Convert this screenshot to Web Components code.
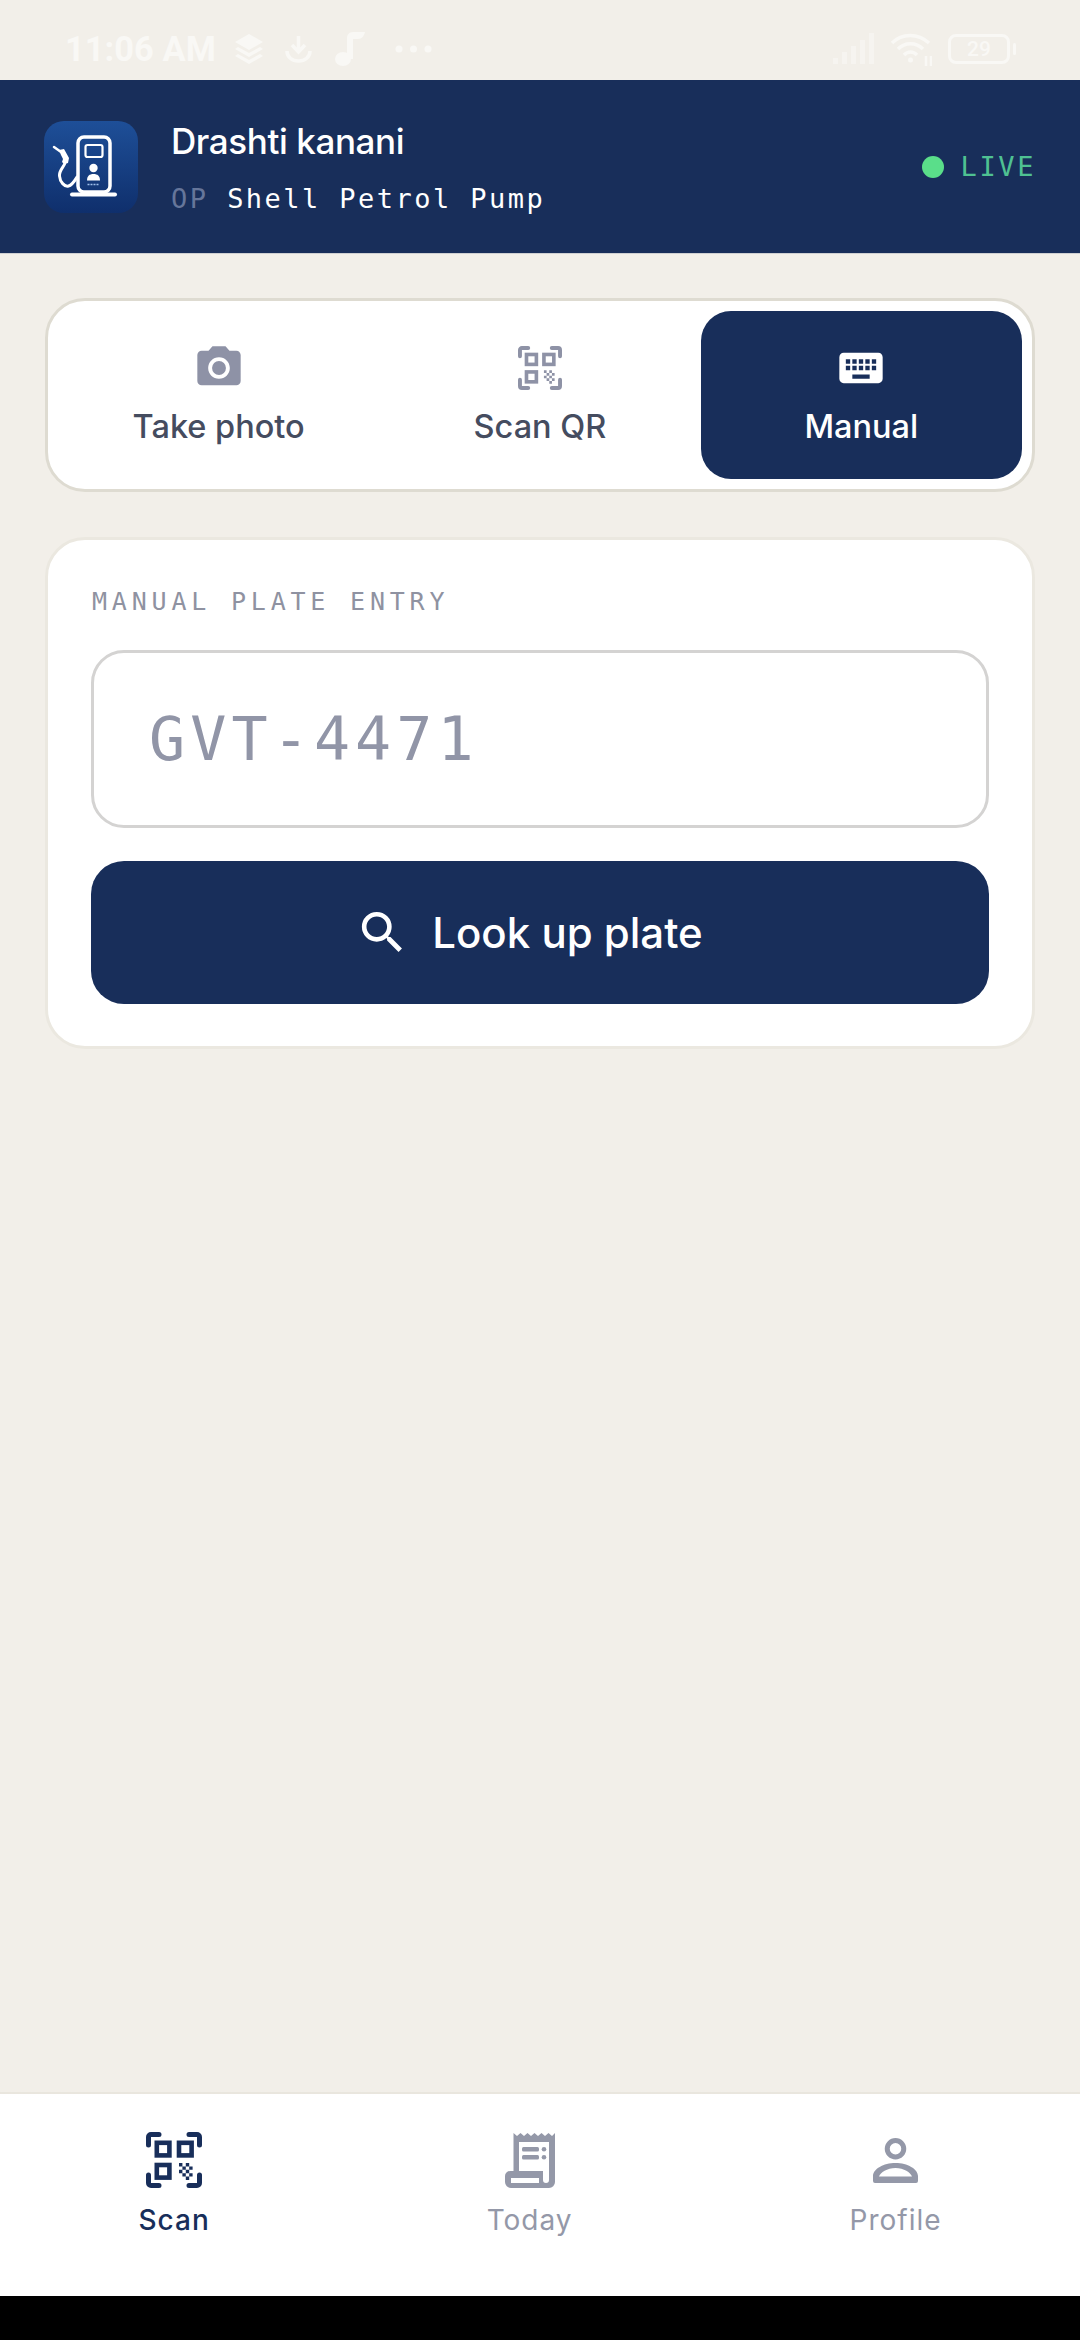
<!DOCTYPE html>
<html>
<head>
<meta charset="utf-8">
<title>Scan</title>
<style>
    html, body { margin: 0; padding: 0; background: #000; }
</style>
</head>
<body>
<app-shell>
    <status-bar slot="status"></status-bar>
    <app-header slot="header" name="Drashti kanani" role-tag="OP" station="Shell Petrol Pump"></app-header>
    <mode-tabs></mode-tabs>
    <plate-card label="MANUAL PLATE ENTRY" placeholder="GVT-4471" action="Look up plate"></plate-card>
    <bottom-nav slot="nav"></bottom-nav>
</app-shell>

<script>
//shared icons
var ICONS = {
    camera: `<svg viewBox="0 0 24 24" fill="currentColor"><circle cx="12" cy="12" r="3.2"/><path d="M9 2L7.17 4H4c-1.1 0-2 .9-2 2v12c0 1.1.9 2 2 2h16c1.1 0 2-.9 2-2V6c0-1.1-.9-2-2-2h-3.17L15 2H9zm3 15c-2.76 0-5-2.24-5-5s2.24-5 5-5 5 2.24 5 5-2.24 5-5 5z"/></svg>`,
    keyboard: `<svg viewBox="0 0 24 24" fill="currentColor"><path d="M20 5H4c-1.1 0-1.99.9-1.99 2L2 17c0 1.1.9 2 2 2h16c1.1 0 2-.9 2-2V7c0-1.1-.9-2-2-2zm-9 3h2v2h-2V8zm0 3h2v2h-2v-2zM8 8h2v2H8V8zm0 3h2v2H8v-2zm-1 2H5v-2h2v2zm0-3H5V8h2v2zm9 7H8v-2h8v2zm0-4h-2v-2h2v2zm0-3h-2V8h2v2zm3 3h-2v-2h2v2zm0-3h-2V8h2v2z"/></svg>`,
    search: `<svg viewBox="0 0 24 24" fill="currentColor"><path d="M15.5 14h-.79l-.28-.27A6.471 6.471 0 0 0 16 9.5 6.5 6.5 0 1 0 9.5 16c1.61 0 3.09-.59 4.23-1.57l.27.28v.79l5 4.99L20.49 19l-4.99-5zm-6 0C7.01 14 5 11.99 5 9.5S7.01 5 9.5 5 14 7.01 14 9.5 11.99 14 9.5 14z"/></svg>`,
    scan: `<svg viewBox="0 0 56 56" fill="currentColor">
        <g fill="none" stroke="currentColor" stroke-width="5" stroke-linecap="round" stroke-linejoin="round">
            <path d="M2.500 13V5a2.500 2.500 0 0 1 2.500-2.500h8"/><path d="M43 2.500h8a2.500 2.500 0 0 1 2.500 2.500v8"/>
            <path d="M2.500 43v8a2.500 2.500 0 0 0 2.500 2.500h8"/><path d="M43 53.500h8a2.500 2.500 0 0 0 2.500-2.500v-8"/>
        </g>
        <g fill="none" stroke="currentColor" stroke-width="4.600">
            <rect x="10.800" y="10.800" width="12.600" height="12.600"/><rect x="33" y="10.800" width="12.600" height="12.600"/><rect x="10.800" y="33" width="12.600" height="12.600"/>
        </g>
        <path d="M33 31h3.400v3.400H33zM39.800 31h3.400v3.400h-3.400zM36.400 34.400h3.400v3.400h-3.400zM43.200 34.400h3.400v3.400h-3.400zM33 37.800h3.400v3.400H33zM39.800 37.800h3.400v3.400h-3.400zM36.400 41.200h3.400v3.400h-3.400zM43.200 41.200h3.400v3.400h-3.400zM39.800 44.600h3.400v3.400h-3.400z"/>
    </svg>`,
    receipt: `<svg viewBox="0 0 50 55" fill="currentColor">
        <path fill-rule="evenodd" d="M8.500 0l3.500 3 3.500-3 3.500 3 3.500-3 3.500 3 3.500-3 3.500 3 3.500-3 3.500 3 3.500-3 3.500 3L50 0v49a6 6 0 0 1-6 6H6a6 6 0 0 1-6-6v-6a5 5 0 0 1 5-5h3.500zM14 9v29h24v9a3 3 0 0 0 6 0V9zM6 45v5h28v-5z"/>
        <rect x="17" y="14" width="17" height="4.500" rx="1.500"/><rect x="17" y="22" width="17" height="4.500" rx="1.500"/>
        <circle cx="39" cy="16.200" r="2.300"/><circle cx="39" cy="24.200" r="2.300"/>
    </svg>`,
    person: `<svg viewBox="0 0 45 45" fill="currentColor">
        <path fill-rule="evenodd" d="M22.500 0a10.750 10.750 0 1 1 0 21.500 10.750 10.750 0 0 1 0-21.500zm0 5a5.750 5.750 0 1 0 0 11.500 5.750 5.750 0 0 0 0-11.500z"/>
        <path fill-rule="evenodd" d="M22.500 25c12 0 22.500 6 22.500 13v5a2 2 0 0 1-2 2H2a2 2 0 0 1-2-2v-5c0-7 10.500-13 22.500-13zM6 38.500h33c-1.500-4-8-8.500-16.500-8.500S7.500 34.500 6 38.500z"/>
    </svg>`
};

//STATUS BAR
var template_status = document.createElement("template");
template_status.innerHTML = `
<style>
    :host {
        display: flex;
        align-items: center;
        height: 80px;
        padding: 18px 70px 0 65px;
        box-sizing: border-box;
        background: #f2efe9;
        color: #f9f8f5;
        font-family: Roboto, sans-serif;
    }
    #time { width: 150px; font-size: 34.500px; font-weight: 700; line-height: 1; margin-right: 20px; white-space: nowrap; }
    .ico { display: block; flex: none; }
    #right { margin-left: auto; display: flex; align-items: center; }
    #batt {
        position: relative;
        width: 62px;
        height: 30px;
        box-sizing: border-box;
        border: 3px solid currentColor;
        border-radius: 8px;
        display: flex;
        align-items: center;
        justify-content: center;
        font-size: 21px;
        font-weight: 500;
    }
    #batt::after {
        content: "";
        position: absolute;
        right: -9px;
        top: 6px;
        width: 3px;
        height: 12px;
        background: currentColor;
        border-radius: 2px;
    }
</style>
<span id="time">11:06 AM</span>
<svg class="ico" width="28" height="30" viewBox="0 0 28 30" fill="currentColor" style="margin-right:22px"><path d="M14 0l14 8-14 8L0 8z"/><path d="M3 13l11 6 11-6 3 2-14 8L0 15z"/><path d="M3 20l11 6 11-6 3 2-14 8L0 22z"/></svg>
<svg class="ico" width="27" height="28" viewBox="0 0 27 28" fill="none" stroke="currentColor" stroke-width="3.500" style="margin-right:23px"><path d="M13.500 1v15M7 10l6.500 7L20 10"/><path d="M2 16c0 6 5 10 11.500 10S25 22 25 16"/></svg>
<svg class="ico" width="30" height="34" viewBox="0 0 30 34" fill="currentColor" style="margin-right:30px"><ellipse cx="8" cy="27" rx="8" ry="7"/><path d="M12 27V6c0-3 2-6 6-6h12c-1 4-3 7-7 7h-5v20z"/></svg>
<svg class="ico" width="37" height="8" viewBox="0 0 37 8" fill="currentColor"><circle cx="4" cy="4" r="3.500"/><circle cx="18.500" cy="4" r="3.500"/><circle cx="33" cy="4" r="3.500"/></svg>
<div id="right">
    <svg class="ico" width="42" height="32" viewBox="0 0 42 32" fill="currentColor" opacity=".6" style="margin-right:15px"><rect x="0" y="25" width="5" height="6"/><rect x="9" y="19" width="5" height="12"/><rect x="18" y="13" width="5" height="18"/><rect x="27" y="7" width="5" height="24"/><rect x="36" y="0" width="5" height="31"/></svg>
    <svg class="ico" width="42" height="35" viewBox="0 0 42 35" fill="none" stroke="currentColor" stroke-width="3.500" style="margin-right:16px"><path d="M2 11C12 1 28 1 39 11"/><path d="M8 17c7-7 18-7 25 0"/><path d="M14 23c4-4 9-4 13 0"/><circle cx="20.500" cy="28" r="2.500" fill="currentColor" stroke="none"/><path d="M36 24v10M41 24v10" stroke-width="2.500"/></svg>
    <div id="batt">29</div>
</div>
`;
class StatusBar extends HTMLElement {
    constructor(){
        super();
        this.attachShadow({mode:"open"});
    }
    connectedCallback(){
        this.shadowRoot.appendChild(template_status.content.cloneNode(true));
    }
}
customElements.define("status-bar", StatusBar);

//HEADER
var template_header = document.createElement("template");
template_header.innerHTML = `
<style>
    :host {
        display: flex;
        align-items: center;
        height: 174px;
        box-sizing: border-box;
        padding: 0 44px;
        background: #182e5a;
        border-bottom: 1px solid #cfd0d2;
        color: #fff;
    }
    #logo { width: 94px; height: 92px; flex: none; display: block; margin-right: 33px; }
    #who { display: flex; flex-direction: column; gap: 21px; flex: 1; padding-top: 4px; }
    #name { font: 500 35px/40px Inter, sans-serif; letter-spacing: -.4px; }
    #sub { font: 400 27px/34px "DejaVu Sans Mono", monospace; letter-spacing: 2.450px; white-space: nowrap; }
    #tag { color: #66769a; }
    #live { display: flex; align-items: center; gap: 17px; font: 400 27px/30px "DejaVu Sans Mono", monospace; letter-spacing: 2.600px; color: #4fc192; }
    #dot { width: 22px; height: 22px; border-radius: 50%; background: #5ade8a; }
</style>
<svg id="logo" viewBox="0 0 94 92">
    <defs><linearGradient id="lg" x1="0" y1="0" x2="0" y2="1"><stop offset="0" stop-color="#1e4f98"/><stop offset="1" stop-color="#0f2f6c"/></linearGradient></defs>
    <rect width="94" height="92" rx="20" fill="url(#lg)"/>
    <g fill="none" stroke="#fff" stroke-linecap="round" stroke-linejoin="round">
        <rect x="34" y="16" width="32" height="55" rx="6" stroke-width="3.500"/>
        <rect x="41.500" y="24" width="17" height="12" rx="2" stroke-width="2.200"/>
        <path d="M28 73.500h43" stroke-width="4"/>
        <path d="M10 26l7 5" stroke-width="2.500"/>
        <path d="M21 42c-1 4-6 7-5.500 13 .5 6 5 11 9 10 4-1 6-5 8.500-9" stroke-width="3"/>
    </g>
    <path d="M15 29l5-1 5 9-1 5-4 1-2-2 1-3-2-4z" fill="#fff"/>
    <circle cx="49.500" cy="47" r="4.200" fill="#fff"/>
    <path d="M43 59.500c0-4.500 2.500-6.500 6.500-6.500s6.500 2 6.500 6.500z" fill="#fff"/>
    <path d="M43.500 63.500h12" stroke="#9fc0ea" stroke-width="1.500" stroke-dasharray="2 1"/>
</svg>
<div id="who">
    <div id="name"></div>
    <div id="sub"><span id="tag"></span> <span id="station"></span></div>
</div>
<div id="live"><span id="dot"></span><span>LIVE</span></div>
`;
class AppHeader extends HTMLElement {
    constructor(){
        super();
        this.attachShadow({mode:"open"});
    }
    connectedCallback(){
        this.shadowRoot.appendChild(template_header.content.cloneNode(true));
        this.shadowRoot.querySelector("#name").innerHTML = this.getAttribute("name");
        this.shadowRoot.querySelector("#tag").innerHTML = this.getAttribute("role-tag");
        this.shadowRoot.querySelector("#station").innerHTML = this.getAttribute("station");
    }
}
customElements.define("app-header", AppHeader);

//ONE TAB
var template_tab = document.createElement("template");
template_tab.innerHTML = `
<style>
    :host {
        display: flex;
        flex: 1 1 0;
        flex-direction: column;
        align-items: center;
        height: 168px;
        box-sizing: border-box;
        padding-top: 31px;
        border-radius: 30px;
        color: #8e92a6;
    }
    :host([active]) { background: #182e5a; color: #fff; }
    #icon { width: 52px; height: 52px; display: flex; align-items: center; justify-content: center; }
    #icon svg { width: 100%; height: 100%; display: block; }
    :host([icon="scan"]) #icon svg { width: 44px; height: 44px; }
    #text { margin-top: 14px; font: 500 32.500px/38px Inter, sans-serif; color: #454c5f; }
    :host([active]) #text { color: #fff; }
</style>
<div id="icon"></div>
<div id="text"><slot></slot></div>
`;
class ModeTab extends HTMLElement {
    constructor(){
        super();
        this.attachShadow({mode:"open"});
    }
    connectedCallback(){
        this.shadowRoot.appendChild(template_tab.content.cloneNode(true));
        this.shadowRoot.querySelector("#icon").innerHTML = ICONS[this.getAttribute("icon")];
    }
}
customElements.define("mode-tab", ModeTab);

//TAB CARD
var template_tabs = document.createElement("template");
template_tabs.innerHTML = `
<style>
    :host {
        display: flex;
        box-sizing: border-box;
        padding: 10px;
        background: #fff;
        border: 3px solid #dedbd1;
        border-radius: 40px;
    }
</style>
<mode-tab icon="camera">Take photo</mode-tab>
<mode-tab icon="scan">Scan QR</mode-tab>
<mode-tab icon="keyboard" active>Manual</mode-tab>
`;
class ModeTabs extends HTMLElement {
    constructor(){
        super();
        this.attachShadow({mode:"open"});
    }
    connectedCallback(){
        this.shadowRoot.appendChild(template_tabs.content.cloneNode(true));
    }
}
customElements.define("mode-tabs", ModeTabs);

//MANUAL ENTRY CARD
var template_plate = document.createElement("template");
template_plate.innerHTML = `
<style>
    :host {
        display: block;
        box-sizing: border-box;
        height: 512px;
        padding: 47px 43px 0;
        background: #fff;
        border: 3px solid #ebe8e0;
        border-radius: 40px;
    }
    #label { padding-left: 1px; font: 400 25px/30px "DejaVu Sans Mono", monospace; letter-spacing: 4.800px; color: #8f92a1; white-space: nowrap; }
    #field {
        display: flex;
        align-items: center;
        height: 178px;
        box-sizing: border-box;
        margin-top: 33px;
        padding-left: 55px;
        border: 3px solid #d4d3d2;
        border-radius: 33px;
        font: 400 60px/70px "DejaVu Sans Mono", monospace;
        letter-spacing: 5.100px;
        color: #9195a7;
    }
    #go {
        display: flex;
        align-items: center;
        justify-content: center;
        gap: 22px;
        height: 143px;
        margin-top: 33px;
        padding-right: 25px;
        border-radius: 33px;
        background: #182e5a;
        color: #fff;
        font: 500 42px/48px Inter, sans-serif;
    }
    #go svg { width: 55px; height: 55px; display: block; margin-left: 3px; }
</style>
<div id="label"></div>
<div id="field"></div>
<div id="go"></div>
`;
class PlateCard extends HTMLElement {
    constructor(){
        super();
        this.attachShadow({mode:"open"});
    }
    connectedCallback(){
        this.shadowRoot.appendChild(template_plate.content.cloneNode(true));
        this.shadowRoot.querySelector("#label").innerHTML = this.getAttribute("label");
        this.shadowRoot.querySelector("#field").innerHTML = this.getAttribute("placeholder");
        this.shadowRoot.querySelector("#go").innerHTML = ICONS.search + "<span>" + this.getAttribute("action") + "</span>";
    }
}
customElements.define("plate-card", PlateCard);

//BOTTOM NAV ITEM
var template_navitem = document.createElement("template");
template_navitem.innerHTML = `
<style>
    :host {
        display: flex;
        flex-direction: column;
        align-items: center;
        color: #9498a8;
        font: 400 28px/34px Inter, sans-serif;
        letter-spacing: 1px;
    }
    :host([active]) { color: #182e5a; font-weight: 500; }
    #icon { height: 56px; display: flex; align-items: center; justify-content: center; }
    #icon svg { display: block; }
    #text { margin-top: 15px; }
</style>
<div id="icon"></div>
<div id="text"><slot></slot></div>
`;
class NavItem extends HTMLElement {
    constructor(){
        super();
        this.attachShadow({mode:"open"});
    }
    connectedCallback(){
        this.shadowRoot.appendChild(template_navitem.content.cloneNode(true));
        var box = this.shadowRoot.querySelector("#icon");
        box.innerHTML = ICONS[this.getAttribute("icon")];
        box.firstElementChild.setAttribute("width", this.getAttribute("w"));
        box.firstElementChild.setAttribute("height", this.getAttribute("h"));
    }
}
customElements.define("nav-item", NavItem);

//BOTTOM NAV
var template_nav = document.createElement("template");
template_nav.innerHTML = `
<style>
    :host {
        display: flex;
        justify-content: space-around;
        align-items: flex-start;
        height: 204px;
        box-sizing: border-box;
        padding-top: 38px;
        background: #fff;
        border-top: 2px solid #e9e6de;
    }
</style>
<nav-item icon="scan" w="56" h="56" active>Scan</nav-item>
<nav-item icon="receipt" w="50" h="55">Today</nav-item>
<nav-item icon="person" w="45" h="45">Profile</nav-item>
`;
class BottomNav extends HTMLElement {
    constructor(){
        super();
        this.attachShadow({mode:"open"});
    }
    connectedCallback(){
        this.shadowRoot.appendChild(template_nav.content.cloneNode(true));
    }
}
customElements.define("bottom-nav", BottomNav);

//PAGE FRAME
var template_shell = document.createElement("template");
template_shell.innerHTML = `
<style>
    :host {
        display: flex;
        flex-direction: column;
        height: 2340px;
        background: #f2efe9;
    }
    main {
        flex: 1;
        display: flex;
        flex-direction: column;
        gap: 45px;
        padding: 44px 45px 0;
    }
    #gesture { height: 44px; background: #000; }
</style>
<slot name="status"></slot>
<slot name="header"></slot>
<main><slot></slot></main>
<slot name="nav"></slot>
<div id="gesture"></div>
`;
class AppShell extends HTMLElement {
    constructor(){
        super();
        this.attachShadow({mode:"open"});
    }
    connectedCallback(){
        this.shadowRoot.appendChild(template_shell.content.cloneNode(true));
    }
}
customElements.define("app-shell", AppShell);
</script>
</body>
</html>
